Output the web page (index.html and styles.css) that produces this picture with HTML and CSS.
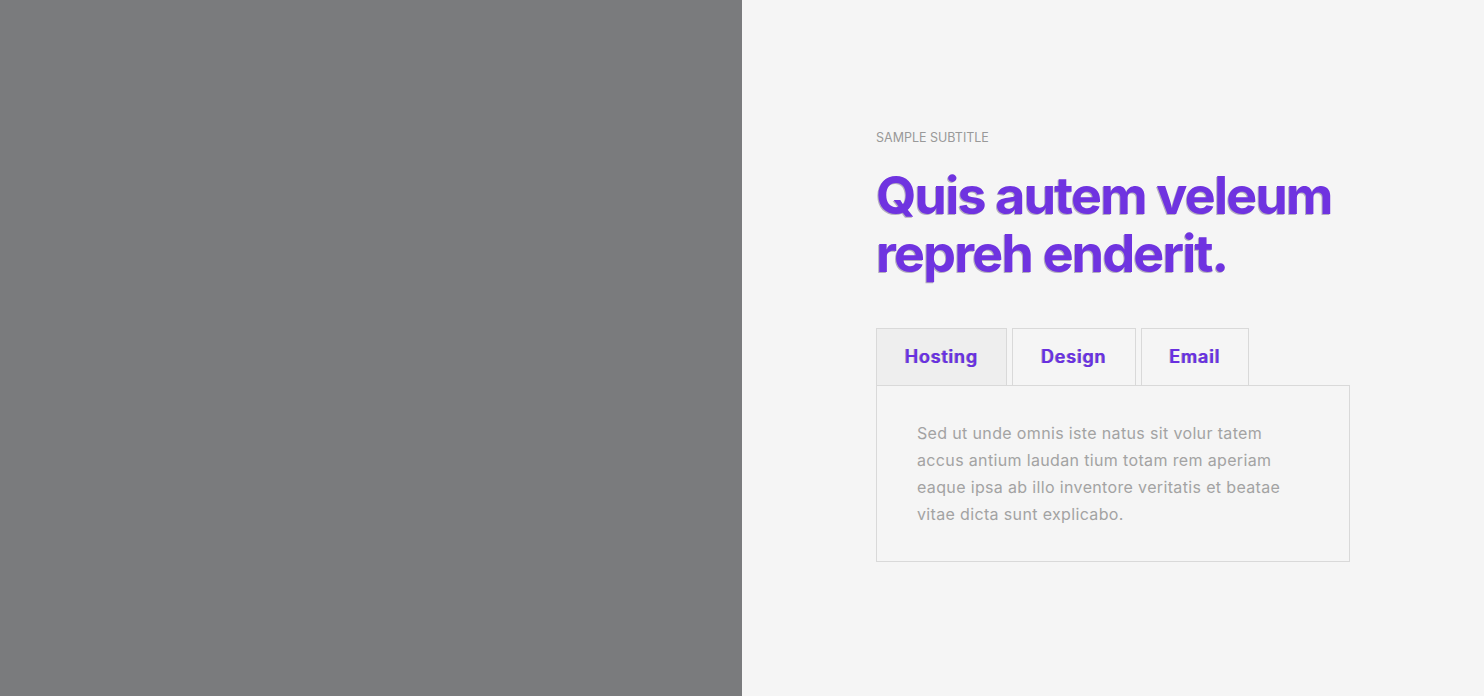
FILE: index.html
```html
<!DOCTYPE html>
<html lang="en">
<head>
    <meta charset="UTF-8">
    <meta name="viewport" content="width=device-width, initial-scale=1.0">
    <title>Tabs Section</title>
    <link rel="stylesheet" href="styles.css">
</head>
<body>

<div class="page">
    <div class="media"></div>

    <div class="content">
        <div class="inner">
            <div class="subtitle">Sample subtitle</div>
            <h1 class="heading">Quis autem veleum repreh enderit.</h1>

            <div class="tabs">
                <div class="tab active">Hosting</div>
                <div class="tab">Design</div>
                <div class="tab">Email</div>
            </div>
            <div class="tab-panel">
                <p>Sed ut unde omnis iste natus sit volur tatem accus antium laudan tium totam rem aperiam eaque ipsa ab illo inventore veritatis et beatae vitae dicta sunt explicabo.</p>
            </div>
        </div>
    </div>
</div>

</body>
</html>
```

FILE: styles.css
```css
body {
    font-family: Inter, "Noto Sans", sans-serif;
    background-color: #f5f5f5;
    margin: 0;
}
.page {
    display: grid;
    grid-template-columns: 742px 1fr;
    height: 696px;
}
.media {
    background-color: #7a7b7d;
}
.content {
    padding: 130px 0 0 134px;
}
.inner {
    width: 474px;
}
.subtitle {
    font-size: 12.5px;
    line-height: 16px;
    color: #999999;
    text-transform: uppercase;
    margin-bottom: 21px;
}
.heading {
    margin: 0 0 45px;
    font-size: 52px;
    line-height: 58px;
    font-weight: 700;
    letter-spacing: -1.8px;
    color: #6f33e0;
    text-shadow: -1px 1px 0 rgba(60, 40, 90, 0.35);
}
.tabs {
    display: flex;
    gap: 5px;
    margin-bottom: -1px;
}
.tab {
    padding: 0 28px;
    height: 56px;
    line-height: 56px;
    border: 1px solid #d9d9d9;
    font-size: 18px;
    font-weight: 600;
    letter-spacing: 0.8px;
    color: #6a2fe0;
    text-shadow: -1px 0 0 rgba(40, 20, 120, 0.5);
    cursor: pointer;
}
.tab.active {
    background-color: #eeeeee;
}
.tab-panel {
    border: 1px solid #d9d9d9;
    padding: 34px 40px 33px;
}
.tab-panel p {
    margin: 0;
    font-size: 16px;
    line-height: 27px;
    letter-spacing: 0.35px;
    color: #a3a3a3;
}
```
